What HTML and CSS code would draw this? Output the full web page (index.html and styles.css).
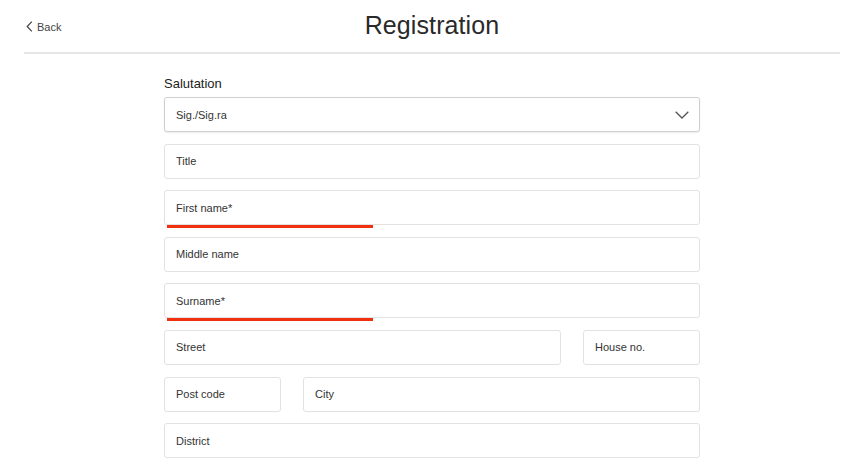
FILE: index.html
```html
<!DOCTYPE html>
<html lang="en">
<head>
<meta charset="utf-8">
<title>Registration</title>
<link rel="stylesheet" href="styles.css">
</head>
<body>
<div class="page">
  <header class="header">
    <a class="back" href="#">
      <svg class="back-icon" width="7" height="11" viewBox="0 0 7 11"><path d="M5.8 0.6 L1.2 5.5 L5.8 10.4" fill="none" stroke="#444" stroke-width="1.2"/></svg>
      <span>Back</span>
    </a>
    <h1 class="title">Registration</h1>
    <div></div>
  </header>
  <form class="form">
    <div class="label">Salutation</div>
    <div class="fields">
      <div class="field select">
        <span>Sig./Sig.ra</span>
        <svg class="chev" width="14" height="8" viewBox="0 0 14 8"><path d="M0.7 0.7 L7 7 L13.3 0.7" fill="none" stroke="#555" stroke-width="1.3"/></svg>
      </div>
      <div class="field">Title</div>
      <div class="field marked">First name*<i class="mark"></i></div>
      <div class="field">Middle name</div>
      <div class="field marked">Surname*<i class="mark"></i></div>
      <div class="row row-street">
        <div class="field">Street</div>
        <div class="field">House no.</div>
      </div>
      <div class="row row-city">
        <div class="field">Post code</div>
        <div class="field">City</div>
      </div>
      <div class="field">District</div>
    </div>
  </form>
</div>
</body>
</html>
```
FILE: styles.css
```css
html, body {
  margin: 0;
  padding: 0;
  background: #fff;
}
body {
  font-family: "Liberation Sans", Arial, Helvetica, sans-serif;
  color: #333;
}
.page {
  margin: 0 6px 0 24px;
}
.header {
  display: grid;
  grid-template-columns: 1fr auto 1fr;
  align-items: center;
  height: 52px;
  border-bottom: 2px solid #e6e6e6;
}
.back {
  display: flex;
  align-items: center;
  gap: 4px;
  padding-left: 2px;
  color: #444;
  text-decoration: none;
  font-size: 11px;
  margin-top: 1px;
}
.back-icon {
  display: block;
}
.title {
  margin: 0;
  font-size: 25px;
  font-weight: normal;
  color: #2a2a2a;
  letter-spacing: 0.1px;
  margin-top: -1px;
}
.form {
  width: 536px;
  margin: 0 auto;
  padding-top: 22px;
}
.label {
  font-size: 13px;
  color: #222;
  line-height: 16px;
  height: 16px;
  margin-bottom: 5px;
  padding-left: 0;
}
.fields {
  display: flex;
  flex-direction: column;
  gap: 11.6px;
}
.field {
  position: relative;
  box-sizing: border-box;
  height: 35px;
  border: 1px solid #e2e2e2;
  border-radius: 3px;
  padding: 0 11px;
  display: flex;
  align-items: center;
  font-size: 11px;
  color: #333;
  background: #fff;
}
.select {
  border-color: #cfcfcf;
  box-shadow: 0 1px 2px rgba(0, 0, 0, 0.08);
  justify-content: space-between;
  padding-right: 10px;
}
.chev {
  display: block;
}
.mark {
  position: absolute;
  left: 2px;
  bottom: -4px;
  width: 206px;
  height: 3px;
  background: #f0300f;
}
.row {
  display: grid;
  gap: 22px;
}
.row-street {
  grid-template-columns: 397px 117px;
}
.row-city {
  grid-template-columns: 117px 397px;
}
```
